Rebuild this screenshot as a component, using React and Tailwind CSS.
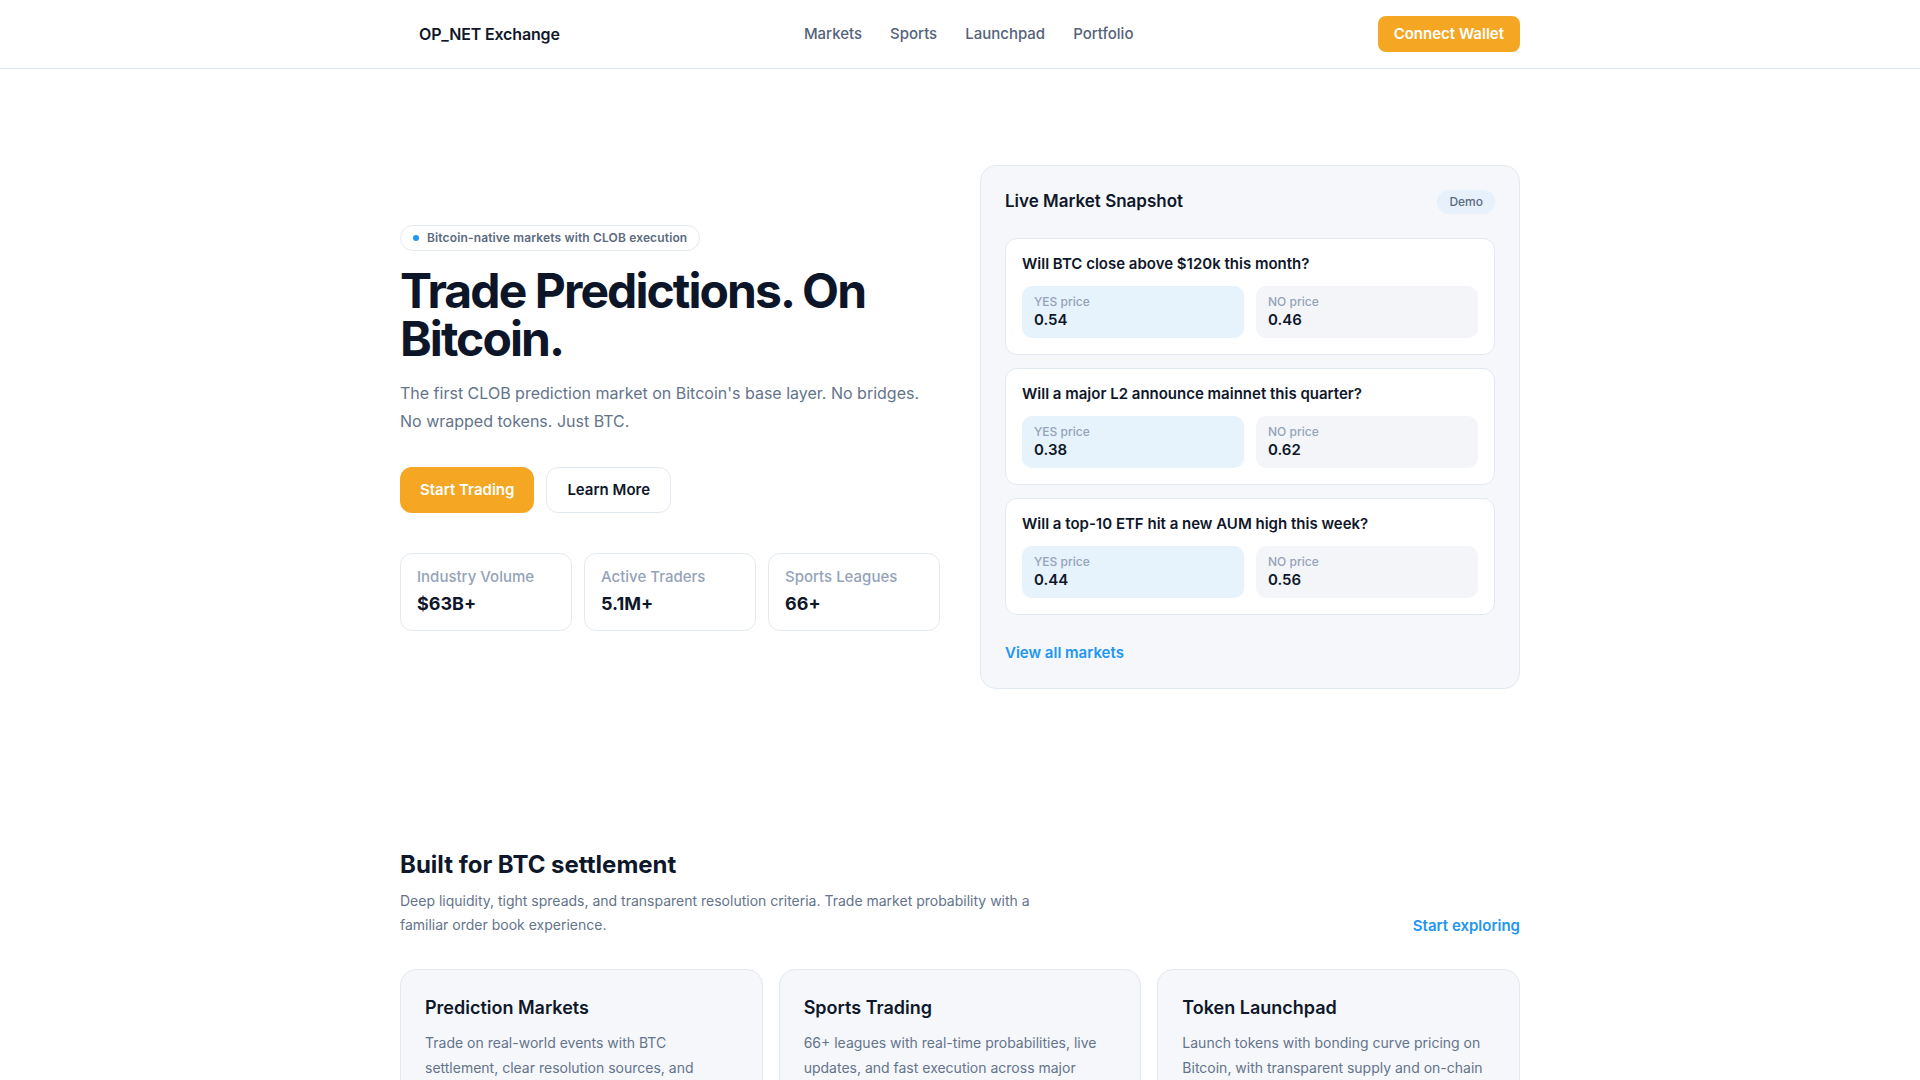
const markets = [
  { q: "Will BTC close above $120k this month?", yes: "0.54", no: "0.46" },
  { q: "Will a major L2 announce mainnet this quarter?", yes: "0.38", no: "0.62" },
  { q: "Will a top-10 ETF hit a new AUM high this week?", yes: "0.44", no: "0.56" },
];

const stats = [
  { label: "Industry Volume", value: "$63B+" },
  { label: "Active Traders", value: "5.1M+" },
  { label: "Sports Leagues", value: "66+" },
];

const features = [
  {
    title: "Prediction Markets",
    body: "Trade on real-world events with BTC settlement, clear resolution sources, and transparent payouts.",
  },
  {
    title: "Sports Trading",
    body: "66+ leagues with real-time probabilities, live updates, and fast execution across major events.",
  },
  {
    title: "Token Launchpad",
    body: "Launch tokens with bonding curve pricing on Bitcoin, with transparent supply and on-chain settlement.",
  },
];

function Header() {
  return (
    <header className="border-b border-[#e3e9f1] bg-white">
      <div className="max-w-[1120px] mx-auto h-[68px] flex items-center justify-between">
        <a className="flex items-center pl-[19px] text-base font-semibold tracking-[-0.01em] text-[#0f172a]">OP_NET Exchange</a>
        <nav className="flex items-center gap-7 text-[15px] font-medium text-[#55637a]">
          <a>Markets</a>
          <a>Sports</a>
          <a>Launchpad</a>
          <a>Portfolio</a>
        </nav>
        <button className="h-9 px-4 rounded-lg bg-[#f5a623] text-white text-[15px] font-semibold">
          Connect Wallet
        </button>
      </div>
    </header>
  );
}

function MarketCard({ m }) {
  return (
    <div className="bg-white border border-[#e3e9f1] rounded-xl px-4 pt-[14px] pb-4">
      <p className="text-[15px] leading-[22px] font-semibold text-[#0f172a]">{m.q}</p>
      <div className="mt-[11px] grid grid-cols-2 gap-3">
        <div className="rounded-[10px] bg-[#e6f2fc] px-3 py-2">
          <div className="text-xs leading-4 text-[#94a3b8] font-medium">YES price</div>
          <div className="text-[15px] leading-5 font-semibold text-[#0f172a]">{m.yes}</div>
        </div>
        <div className="rounded-[10px] bg-[#f3f5f9] px-3 py-2">
          <div className="text-xs leading-4 text-[#94a3b8] font-medium">NO price</div>
          <div className="text-[15px] leading-5 font-semibold text-[#0f172a]">{m.no}</div>
        </div>
      </div>
    </div>
  );
}

export default function App() {
  return (
    <div className="min-h-screen bg-white text-[#0f172a]" style={{ fontFamily: "Inter, 'Noto Sans', sans-serif" }}>
      <Header />

      <section className="py-24">
        <div className="max-w-[1120px] mx-auto grid grid-cols-2 gap-10 items-center">
          <div>
            <div className="inline-flex items-center gap-2 h-[26px] px-3 rounded-full border border-[#e3e9f1] bg-white text-xs font-semibold tracking-[0.012em] text-[#5b6a80]">
              <span className="w-1.5 h-1.5 rounded-full bg-[#2196f3]" />
              Bitcoin-native markets with CLOB execution
            </div>
            <h1 className="mt-4 text-5xl leading-[48px] font-bold tracking-[-0.04em] text-[#0c1628]">
              Trade Predictions. On Bitcoin.
            </h1>
            <p className="mt-4 text-base leading-7 text-[#64748b]">
              The first CLOB prediction market on Bitcoin's base layer. No bridges. No wrapped tokens. Just BTC.
            </p>
            <div className="mt-8 flex items-center gap-3">
              <button className="h-[46px] px-5 rounded-xl bg-[#f5a623] text-white text-[15px] font-semibold">
                Start Trading
              </button>
              <button className="h-[46px] px-5 rounded-xl bg-white border border-[#e3e9f1] text-[#0f172a] text-[15px] font-semibold">
                Learn More
              </button>
            </div>
            <div className="mt-10 grid grid-cols-3 gap-3">
              {stats.map((s) => (
                <div key={s.label} className="border border-[#e3e9f1] rounded-xl px-4 py-[13px]">
                  <div className="text-[15px] leading-5 font-medium text-[#94a3b8]">{s.label}</div>
                  <div className="mt-1 text-lg leading-[26px] font-bold text-[#0f172a]">{s.value}</div>
                </div>
              ))}
            </div>
          </div>

          <div className="bg-[#f5f7fa] border border-[#e3e9f1] rounded-2xl p-6">
            <div className="flex items-center justify-between h-6">
              <h2 className="text-[17px] font-semibold text-[#0f172a]">Live Market Snapshot</h2>
              <span className="px-3 py-1 rounded-full bg-[#e6f1fb] text-xs leading-4 font-medium text-[#5b6a80]">Demo</span>
            </div>
            <div className="mt-6 flex flex-col gap-[13px]">
              {markets.map((m) => (
                <MarketCard key={m.q} m={m} />
              ))}
            </div>
            <a className="block mt-[27px] text-[15px] leading-[22px] font-semibold text-[#2196f3]">View all markets</a>
          </div>
        </div>
      </section>

      <section className="pt-[64px] pb-24">
        <div className="max-w-[1120px] mx-auto">
          <div className="flex items-end justify-between">
            <div>
              <h2 className="text-2xl leading-8 font-bold text-[#0f172a]">Built for BTC settlement</h2>
              <p className="mt-2 max-w-[640px] text-sm leading-6 text-[#64748b]">
                Deep liquidity, tight spreads, and transparent resolution criteria. Trade market probability with a familiar order book experience.
              </p>
            </div>
            <a className="text-[15px] leading-[22px] font-semibold text-[#2196f3]">Start exploring</a>
          </div>
          <div className="mt-8 grid grid-cols-3 gap-4">
            {features.map((f) => (
              <div key={f.title} className="bg-[#f5f7fa] border border-[#e3e9f1] rounded-2xl p-6">
                <h3 className="text-lg leading-7 font-semibold text-[#0f172a]">{f.title}</h3>
                <p className="mt-2 text-sm leading-[25px] text-[#64748b]">{f.body}</p>
              </div>
            ))}
          </div>
        </div>
      </section>
    </div>
  );
}
